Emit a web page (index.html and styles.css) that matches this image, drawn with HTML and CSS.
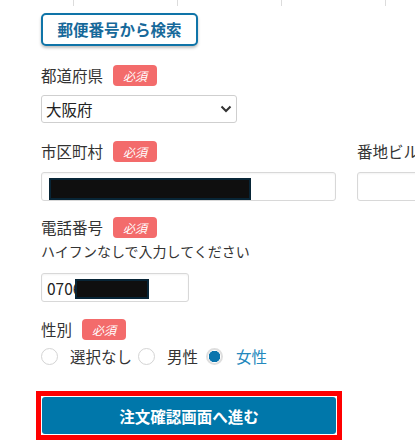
FILE: index.html
```html
<!DOCTYPE html>
<html lang="ja">
<head>
<meta charset="utf-8">
<link rel="stylesheet" href="styles.css">
</head>
<body>
<div class="toplines">
  <div class="cell first"></div><div class="cell"></div><div class="cell"></div><div class="cell"></div>
</div>
<div class="form">
  <button class="zip-btn" type="button">郵便番号から検索</button>

  <div class="field f-pref">
    <div class="label-row"><span class="label">都道府県</span><span class="badge">必須</span></div>
    <div class="select">
      <span>大阪府</span>
      <svg class="chev" width="12" height="8" viewBox="0 0 12 8"><path d="M1.5 1.5 L6 6 L10.5 1.5" fill="none" stroke="#333" stroke-width="2"/></svg>
    </div>
  </div>

  <div class="row2 f-city">
    <div class="field">
      <div class="label-row"><span class="label">市区町村</span><span class="badge">必須</span></div>
      <div class="input wide"><span class="censor c-city"></span></div>
    </div>
    <div class="field">
      <div class="label-row"><span class="label">番地ビル名</span></div>
      <div class="input wide"></div>
    </div>
  </div>

  <div class="field f-tel">
    <div class="label-row"><span class="label">電話番号</span><span class="badge">必須</span></div>
    <p class="hint">ハイフンなしで入力してください</p>
    <div class="input tel"><span class="val">0706</span><span class="censor c-tel"></span></div>
  </div>

  <div class="field f-sex">
    <div class="label-row"><span class="label">性別</span><span class="badge">必須</span></div>
    <div class="radios">
      <label class="radio"><span class="dot"></span><span class="rl">選択なし</span></label>
      <label class="radio"><span class="dot"></span><span class="rl">男性</span></label>
      <label class="radio on"><span class="dot"></span><span class="rl">女性</span></label>
    </div>
  </div>

  <div class="highlight">
    <button class="submit" type="button">注文確認画面へ進む</button>
  </div>
</div>
</body>
</html>
```
FILE: styles.css
```css
* { box-sizing: border-box; }
html, body { margin: 0; padding: 0; background: #fff; overflow: hidden; }
body {
  font-family: "Noto Sans CJK JP", "Noto Sans", sans-serif;
  font-size: 15.5px;
  color: #333;
  width: 415px;
  height: 446px;
}
.toplines { display: flex; height: 6px; padding-left: 73px; }
.cell { width: 104px; border-left: 1px solid #dcdcdc; flex: none; }
.form { padding-left: 41px; }
.zip-btn {
  display: block;
  margin-top: 7px;
  width: 157px;
  height: 33px;
  border: 2px solid #0f74a8;
  border-radius: 5px;
  background: #fff;
  box-shadow: 0 2px 3px rgba(0,0,0,0.25);
  color: #17699a;
  font-family: inherit;
  font-size: 15.5px;
  font-weight: 700;
  padding: 0;
  line-height: 1;
}
.label-row { display: flex; align-items: center; gap: 10px; height: 21px; }
.label { line-height: 21px; white-space: nowrap; }
.badge {
  display: inline-flex; align-items: center; justify-content: center;
  width: 44px; height: 21px;
  background: #f36b6b; color: #fff;
  border-radius: 4px;
  font-size: 12px; font-style: italic;
}
.f-pref { margin-top: 19px; }
.select {
  margin-top: 9px;
  width: 196px; height: 28px;
  border: 1px solid #cfcfcf; border-radius: 3px;
  display: flex; align-items: center; justify-content: space-between;
  padding: 0 4px 0 4px; color: #222;
}
.row2 { display: flex; gap: 21px; margin-top: 18px; white-space: nowrap; width: 374px; overflow: hidden; }
.row2 .field { flex: none; }
.input {
  position: relative;
  margin-top: 10px;
  height: 29px;
  border: 1px solid #d8d8d8; border-radius: 3px;
  box-shadow: inset 0 1px 2px rgba(0,0,0,0.05);
  display: flex; align-items: center; padding-left: 5px; color: #222;
}
.wide { width: 295px; }
.censor {
  position: absolute;
  background: #0f0f0f;
  border: 2px solid #082536;
}
.c-city { left: 7px; top: 5px; width: 202px; height: 22px; }
.f-tel { margin-top: 16px; }
.hint { margin: 0; height: 35px; line-height: 26px; font-size: 14px; }
.tel { margin-top: 0; width: 148px; }
.c-tel { left: 33px; top: 5px; width: 74px; height: 20px; }
.f-sex { margin-top: 17px; }
.radios { display: flex; align-items: center; margin-top: 7px; height: 18px; }
.radio { display: flex; align-items: center; gap: 12px; margin-right: 6px; }
.dot {
  width: 17px; height: 17px; border-radius: 50%;
  border: 1px solid #d4d4d4; background: #fff; flex: none;
}
.on .dot {
  border: 2px solid #dedede;
  background: radial-gradient(circle, #0a74ad 0 5.5px, #fff 6px);
}
.on .rl { color: #2488bd; }
.rl { line-height: 18px; }
.radio:nth-child(3) { margin-left: 2px; gap: 13px; }
.highlight {
  margin-top: 26px;
  margin-left: -5px;
  width: 306px;
  border: 5px solid #f00;
  padding: 1px;
  background: #fff;
}
.submit {
  display: block;
  width: 294px; height: 37px;
  background: #0077aa;
  border: none;
  border-radius: 3px;
  color: #fff;
  font-family: inherit;
  font-size: 15.5px; font-weight: 700;
  padding: 0;
}
```
